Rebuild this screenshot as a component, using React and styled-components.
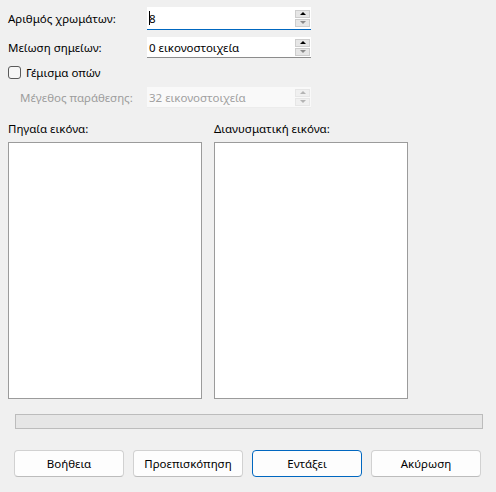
import React from 'react';
import styled, { createGlobalStyle } from 'styled-components';

const GlobalStyle = createGlobalStyle`
  html, body {
    margin: 0;
    padding: 0;
    background: #f0f0f0;
  }
  body {
    font-family: 'Noto Sans', 'DejaVu Sans', sans-serif;
    font-size: 11.5px;
    color: #000;
  }
`;

const Dialog = styled.div`
  width: 496px;
  height: 492px;
  background: #f0f0f0;
  box-sizing: border-box;
  padding-top: 7px;
  display: flex;
  flex-direction: column;
`;

const Form = styled.div`
  display: grid;
  grid-template-columns: 139px 164px;
  grid-template-rows: 23px 21px 15px 21px;
  row-gap: 7px;
  padding-left: 8px;
`;

const Label = styled.div`
  display: flex;
  align-items: center;
  padding-left: ${(p) => (p.$indent ? '12px' : '0')};
  color: ${(p) => (p.$disabled ? '#9d9d9d' : '#000')};
  white-space: nowrap;
`;

const CheckRow = styled.label`
  grid-column: 1 / 3;
  display: flex;
  align-items: center;
  gap: 5px;
`;

const Box = styled.span`
  width: 11px;
  height: 11px;
  border: 1px solid #5a5a5a;
  border-radius: 3px;
  background: #f6f6f6;
`;

const SpinField = styled.div`
  display: flex;
  align-items: stretch;
  background: ${(p) => (p.$disabled ? '#f9f9f9' : '#fff')};
  border-bottom: 1px solid
    ${(p) => (p.$focused ? '#0067c0' : p.$disabled ? '#ececec' : '#8c8c8c')};
  box-sizing: border-box;
`;

const FieldText = styled.div`
  flex: 1;
  display: flex;
  align-items: center;
  padding-left: 2px;
  color: ${(p) => (p.$disabled ? '#a0a0a0' : '#000')};
`;

const Caret = styled.span`
  display: inline-block;
  width: 1px;
  height: 14px;
  background: #000;
  margin-right: -1px;
`;

const Spinner = styled.div`
  display: flex;
  flex-direction: column;
  justify-content: center;
  gap: 1px;
  padding: 0 1px 0 0;
  width: 15px;
`;

const SpinButton = styled.div`
  height: 8px;
  box-sizing: border-box;
  background: ${(p) => (p.$disabled ? '#f0f0f0' : '#e6e6e6')};
  border: 1px solid ${(p) => (p.$disabled ? '#e6e6e6' : '#cdcdcd')};
  display: flex;
  align-items: center;
  justify-content: center;
`;

const Arrow = styled.span`
  width: 0;
  height: 0;
  border-left: 3px solid transparent;
  border-right: 3px solid transparent;
  ${(p) =>
    p.$down
      ? `border-top: 3px solid ${p.$color};`
      : `border-bottom: 3px solid ${p.$color};`}
`;

const Previews = styled.div`
  display: grid;
  grid-template-columns: 194px 194px;
  column-gap: 12px;
  padding-left: 8px;
  margin-top: 13px;
`;

const PreviewColumn = styled.div`
  display: flex;
  flex-direction: column;
  gap: 5px;
`;

const PreviewLabel = styled.div`
  height: 16px;
  line-height: 16px;
`;

const PreviewBox = styled.div`
  height: 257px;
  box-sizing: border-box;
  background: #fff;
  border: 1px solid #9b9b9b;
`;

const Progress = styled.div`
  margin: 15px 0 0 15px;
  width: 468px;
  height: 15px;
  box-sizing: border-box;
  background: #e6e6e6;
  border: 1px solid #bcbcbc;
`;

const ButtonRow = styled.div`
  display: grid;
  grid-template-columns: repeat(4, 110px);
  column-gap: 9px;
  padding-left: 14px;
  margin-top: 21px;
`;

const Button = styled.button`
  height: 27px;
  box-sizing: border-box;
  font-family: inherit;
  font-size: 11.5px;
  color: #000;
  background: #fdfdfd;
  border: 1px solid ${(p) => (p.$primary ? '#0067c0' : '#d1d1d1')};
  border-bottom-color: ${(p) => (p.$primary ? '#0067c0' : '#bcbcbc')};
  border-radius: 4px;
  padding: 0;
`;

const SpinBox = ({ value, focused, disabled }) => {
  const color = disabled ? '#b4b4b4' : '#000';
  return (
    <SpinField $focused={focused} $disabled={disabled}>
      <FieldText $disabled={disabled}>
        {focused && <Caret />}
        {value}
      </FieldText>
      <Spinner>
        <SpinButton $disabled={disabled}>
          <Arrow $color={color} />
        </SpinButton>
        <SpinButton $disabled={disabled}>
          <Arrow $down $color={disabled ? '#b4b4b4' : '#8a8a8a'} />
        </SpinButton>
      </Spinner>
    </SpinField>
  );
};

const App = () => {
  return (
    <>
      <GlobalStyle />
      <Dialog>
        <Form>
          <Label>Αριθμός χρωμάτων:</Label>
          <SpinBox value="8" focused />
          <Label>Μείωση σημείων:</Label>
          <SpinBox value="0 εικονοστοιχεία" />
          <CheckRow>
            <Box />
            Γέμισμα οπών
          </CheckRow>
          <Label $indent $disabled>
            Μέγεθος παράθεσης:
          </Label>
          <SpinBox value="32 εικονοστοιχεία" disabled />
        </Form>
        <Previews>
          <PreviewColumn>
            <PreviewLabel>Πηγαία εικόνα:</PreviewLabel>
            <PreviewBox />
          </PreviewColumn>
          <PreviewColumn>
            <PreviewLabel>Διανυσματική εικόνα:</PreviewLabel>
            <PreviewBox />
          </PreviewColumn>
        </Previews>
        <Progress />
        <ButtonRow>
          <Button>Βοήθεια</Button>
          <Button>Προεπισκόπηση</Button>
          <Button $primary>Εντάξει</Button>
          <Button>Ακύρωση</Button>
        </ButtonRow>
      </Dialog>
    </>
  );
};

export default App;
